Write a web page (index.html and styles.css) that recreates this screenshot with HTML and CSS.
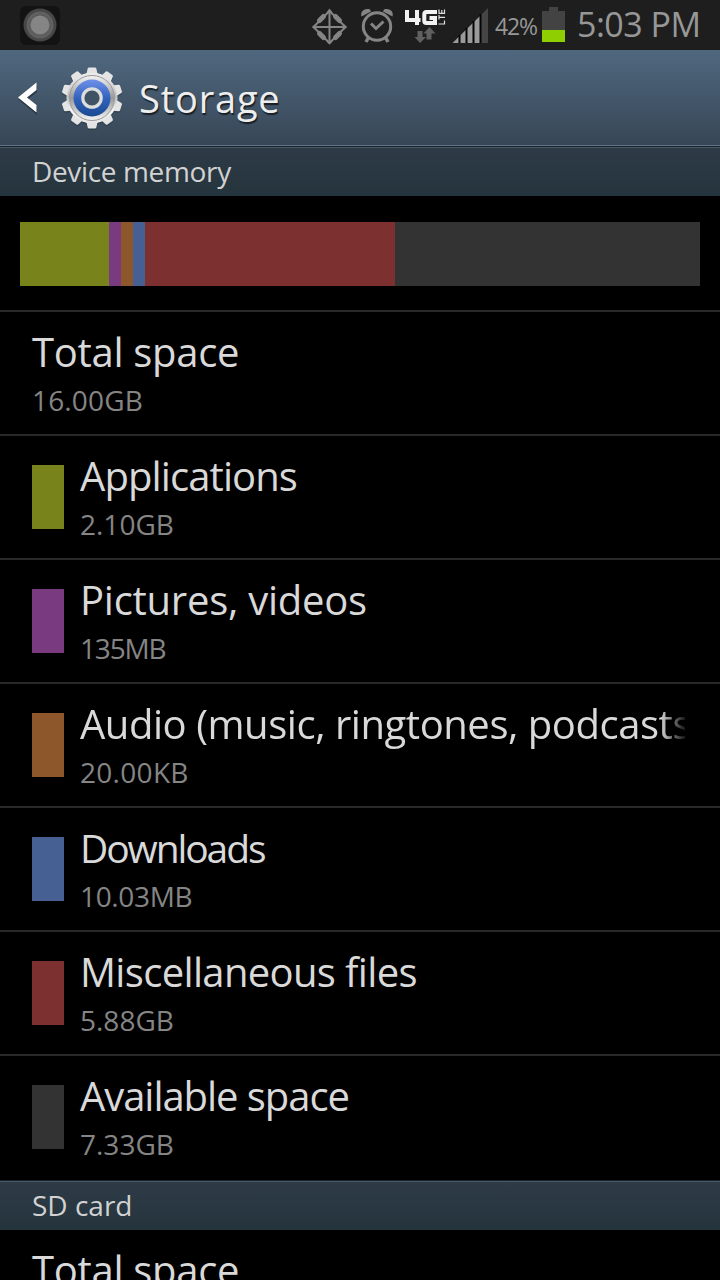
FILE: index.html
```html
<!DOCTYPE html>
<html lang="en">
<head>
<meta charset="utf-8">
<title>Storage</title>
<link rel="stylesheet" href="styles.css">
</head>
<body>
<div class="screen">
  <header class="status">
    <svg class="touch" width="40" height="40" viewBox="0 0 40 40">
      <rect width="40" height="39" rx="6" fill="#131313"/>
      <circle cx="20" cy="19" r="16.500" fill="#474747"/>
      <circle cx="20" cy="19" r="13.500" fill="#606060"/>
      <circle cx="20" cy="19" r="10.500" fill="#585858"/>
      <circle cx="20" cy="19" r="9.500" fill="#858585"/>
    </svg>
    <svg class="icons" width="180" height="50" viewBox="310 0 180 50">
      <g stroke="#858585" fill="none">
        <path d="M329.500 11L345.500 27L329.500 43L313.500 27Z" stroke-width="2"/>
        <path d="M329.500 11V43M313.500 27H345.500" stroke-width="2"/>
        <path d="M319.500 20.500L323.500 16.500M335.500 16.500L339.500 20.500M319.500 33.500L323.500 37.500M335.500 37.500L339.500 33.500" stroke-width="5" stroke-linecap="round"/>
      </g>
      <path d="M329.500 8.500L332.500 12.500H326.500ZM329.500 44.500L332.500 41.500H326.500ZM312 27L315.500 24V30ZM347 27L343.500 24V30Z" fill="#858585"/>
      <g fill="none" stroke="#858585">
        <circle cx="377" cy="26.500" r="13.700" stroke-width="3"/>
        <path d="M371 23.500L376 28.500L383.500 21.500" stroke-width="3"/>
        <path d="M368.500 37.500L366 42M385.500 37.500L388 42" stroke-width="3.500"/>
      </g>
      <path d="M361.500 16.500C360 12 364 7.500 370 9.500L371 11.500ZM392.500 16.500C394 12 390 7.500 384 9.500L383 11.500Z" fill="#858585"/>
      <g fill="none" stroke="#f2f2f2" stroke-width="4">
        <path d="M407 10V20H420.500M417 10V25"/>
        <path d="M437 12H426.500Q424.300 12 424.300 14.500V20.500Q424.300 23 426.500 23H435V18H429.500"/>
      </g>
      <path d="M438.500 24H444.500V20.500M439 15V19.500M439 17.300H445M439 9.500V13.300H444.500V9.500M441.800 10V13" fill="none" stroke="#dedede" stroke-width="1.200"/>
      <path d="M417.500 31H422.500V37H426L420 43L414.500 37H417.500ZM426.500 39.500H431.500V33.500H435.500L429.500 27L423.500 33.500H426.500Z" fill="#606060"/>
      <path d="M452.500 43L480 16V43Z" fill="#9a9a9a"/>
      <path d="M481 15L488 8V43H481Z" fill="#454545"/>
      <path d="M459.500 35V43M466.500 28V43M473.500 21V43M480.500 14V43" stroke="#050505" stroke-width="2"/>
    </svg>
    <span class="percent">42%</span>
    <svg class="battery" width="23" height="36" viewBox="0 0 23 36">
      <path d="M0 4H7V0H16V4H23V35H0Z" fill="#434343"/>
      <rect y="23" width="23" height="12" fill="#8fce00"/>
    </svg>
    <span class="clock">5:03 PM</span>
  </header>

  <div class="actionbar">
    <svg class="back" width="22" height="34" viewBox="0 0 22 34">
      <path d="M19 4V11L9.500 18.500L19 26V34L0.500 18.500Z" fill="#1c2830" opacity=".65"/>
      <path d="M18.500 1.500V9L9 16.500L18.500 24V31.500L0 16.500Z" fill="#fff"/>
    </svg>
    <svg class="gear" width="64" height="66" viewBox="-32 -32 64 66">
      <defs>
        <linearGradient id="metal" x1="0" y1="0" x2="0" y2="1">
          <stop offset="0" stop-color="#eee"/><stop offset=".48" stop-color="#bcbcbc"/><stop offset=".75" stop-color="#f4f4f4"/><stop offset="1" stop-color="#e6e6e6"/>
        </linearGradient>
        <linearGradient id="rim" x1="0" y1="0" x2="0" y2="1">
          <stop offset="0" stop-color="#f5f5f5"/><stop offset=".5" stop-color="#999"/><stop offset="1" stop-color="#f5f5f5"/>
        </linearGradient>
        <linearGradient id="blue" x1="0" y1="0" x2="0" y2="1">
          <stop offset="0" stop-color="#6f91eb"/><stop offset=".5" stop-color="#3263bd"/><stop offset="1" stop-color="#194a91"/>
        </linearGradient>
        <path id="tooth" d="M-6 -22L-4.300 -29.500Q-4 -30.500 -3 -30.500H3Q4 -30.500 4.300 -29.500L6 -22Z"/>
        <g id="body">
          <circle r="25.500"/>
          <use href="#tooth"/><use href="#tooth" transform="rotate(36)"/><use href="#tooth" transform="rotate(72)"/><use href="#tooth" transform="rotate(108)"/><use href="#tooth" transform="rotate(144)"/><use href="#tooth" transform="rotate(180)"/><use href="#tooth" transform="rotate(216)"/><use href="#tooth" transform="rotate(252)"/><use href="#tooth" transform="rotate(288)"/><use href="#tooth" transform="rotate(324)"/>
        </g>
      </defs>
      <use href="#body" y="1.500" fill="#25323c" opacity=".5"/>
      <use href="#body" fill="#e4e4e4"/>
      <circle r="25" fill="url(#metal)"/>
      <circle r="22.500" fill="url(#rim)" stroke="#999" stroke-width="1"/>
      <circle r="18.500" fill="url(#blue)"/>
      <circle r="9.200" fill="#405365" stroke="#ddd" stroke-width="3.200"/>
    </svg>
    <h1 class="heading">Storage</h1>
  </div>

  <h2 class="section"><span class="device">Device memory</span></h2>
  <div class="usage">
    <div class="bar">
      <i class="apps" style="width:89px"></i><i class="pics" style="width:12px"></i><i class="audio" style="width:12px"></i><i class="down" style="width:12px"></i><i class="misc" style="width:250px"></i><i class="free" style="width:305px"></i>
    </div>
  </div>
  <div class="row"><div class="text"><div class="title t-total">Total space</div><div class="value v-total">16.00GB</div></div></div>
  <div class="row"><i class="swatch apps"></i><div class="text"><div class="title t-apps">Applications</div><div class="value v-apps">2.10GB</div></div></div>
  <div class="row"><i class="swatch pics"></i><div class="text"><div class="title t-pics">Pictures, videos</div><div class="value v-pics">135MB</div></div></div>
  <div class="row"><i class="swatch audio"></i><div class="text"><div class="title t-audio">Audio (music, ringtones, podcasts</div><div class="value v-audio">20.00KB</div></div></div>
  <div class="row"><i class="swatch down"></i><div class="text"><div class="title t-down">Downloads</div><div class="value v-down">10.03MB</div></div></div>
  <div class="row"><i class="swatch misc"></i><div class="text"><div class="title t-misc">Miscellaneous files</div><div class="value v-misc">5.88GB</div></div></div>
  <div class="row last"><i class="swatch free"></i><div class="text"><div class="title t-free">Available space</div><div class="value v-free">7.33GB</div></div></div>
  <h2 class="section"><span class="sd">SD card</span></h2>
  <div class="row last"><div class="text"><div class="title t-total">Total space</div></div></div>
</div>
</body>
</html>
```

FILE: styles.css
```css
* { box-sizing: border-box; margin: 0; }
body { background: #000; font-family: "Open Sans", "Noto Sans", sans-serif; }
svg, i { display: block; flex: none; }
.screen { width: 720px; height: 1280px; overflow: hidden; background: #000; }
.status { height: 50px; display: flex; background: #1e1e1e; color: #979797; white-space: nowrap; }
.touch { margin: 6px 0 0 20px; }
.icons { margin-left: 250px; }
.percent { width: 47px; padding-left: 5px; font-size: 23px; line-height: 52px; letter-spacing: -1.1px; }
.battery { margin: 7px 0 0 5px; }
.clock { margin-left: 12px; font-size: 34px; line-height: 48px; letter-spacing: -.5px; }
.actionbar { height: 96px; display: flex; background: linear-gradient(#50687f, #374656); border-bottom: 1px solid #607888; }
.back { margin: 31px 0 0 18px; }
.gear { margin: 16px 0 0 20px; }
.heading { margin-left: 15px; font-size: 38px; font-weight: 400; line-height: 96px; letter-spacing: .8px; color: #eee; text-shadow: 1px 2px 1px #182028; }
.section { height: 50px; padding: 2px 0 0 32px; border-top: 1px solid #17242d; background: linear-gradient(#485966 0 1px, #2e3b47 1px, #24343c); font-size: 28px; font-weight: 400; line-height: 45px; color: #d2d2d2; }
.device { letter-spacing: -.35px; }
.usage { height: 116px; padding: 26px 20px 0; border-bottom: 2px solid #282828; }
.bar { display: flex; height: 64px; }
.apps { background: #78831c; }
.pics { background: #793a80; }
.audio { background: #8e572b; }
.down { background: #476094; }
.misc { background: #7d3030; }
.free { background: #333; }
.row { height: 124px; display: flex; padding-left: 32px; border-bottom: 2px solid #282828; }
.row.last { border-bottom: 0; }
.swatch { width: 32px; height: 64px; margin: 29px 16px 0 0; }
.text { padding-top: 13px; }
.title { height: 54px; line-height: 54px; font-size: 40px; color: #d9d9d9; white-space: nowrap; }
.value { height: 40px; line-height: 42px; font-size: 28px; color: #858585; white-space: nowrap; }
.t-total { letter-spacing: -.3px; }
.t-apps { letter-spacing: -.9px; }
.t-pics { letter-spacing: -.25px; }
.t-audio { width: 605px; overflow: hidden; letter-spacing: -.45px; mask-image: linear-gradient(90deg, #000 580px, transparent 608px); }
.t-down { font-size: 39px; letter-spacing: -2.1px; }
.t-misc { letter-spacing: -.66px; }
.t-free { letter-spacing: -1.05px; }
.v-total { letter-spacing: .15px; }
.v-pics { letter-spacing: -1.15px; }
.v-audio { letter-spacing: .3px; }
.v-down { letter-spacing: -.35px; }
```
